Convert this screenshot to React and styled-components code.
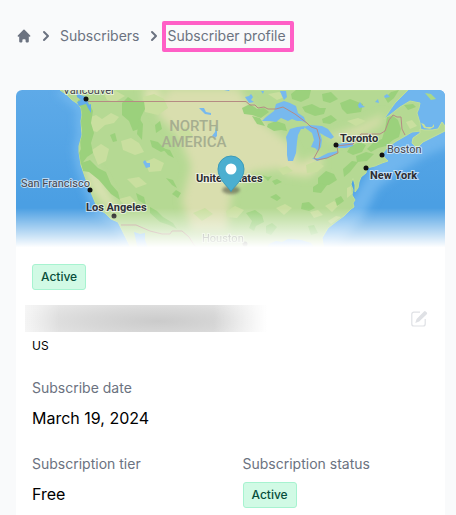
import React from 'react'

// Import icons
import { HiHome, HiChevronRight } from 'react-icons/hi'

// Import styled-components
import styled, { createGlobalStyle } from 'styled-components'

// map data
const westCoast =
  'M60 90L67 95 72 100 78 104 81 108 82 115 81 121 82 135 79 146 79 152 81 165 85 177 90 190 95 202 98 209 105 213 111 219 118 222 123 232 127 240 132 250'

const mainland = `${westCoast} L324 250 322 238 328 228 337 221 344 216 351 209 354 207 353 203 355 200 352 195 353 190 351 184 353 178 355 185 355 192 358 188 359 182 361 177 366 173 367 168 375 166 382 163 388 161 384 157 383 153 387 148 395 142 407 135 412 132 421 131 420 123 417 113 419 108 420 103 410 101 400 107 390 115 384 119 390 110 395 103 400 98 408 90Z`

const novaScotia =
  'M420 129L424 130 432 130 438 129 442 122 445 126 445 131 433 137 423 142 417 148 412 143 413 138 420 133Z'

const darkPatches = [
  'M78 100l6-2 5 5 4 8-2 12 3 10-3 10 2 10-6 4-6 8-4-2 1-8 3-6-1-9 2-10-3-12z',
  'M81 163l9-3 8 8 8 4 5 12 7 8 2 8-9-6-12-14-10-8-6-1z',
  'M122 103l6-6 6 4 10 0 1 8-4 8-2 12-6 2-4-10-7-6z',
  'M110 135l5-2 2 8-4 1z',
  'M139 118l4 6-1 16-5-6z',
  'M150 140l8 2 8 8-5 2-9-5z',
  'M162 148l8 2 4 8-6-3z',
  'M155 125l5-4 2 8-6 4z',
  'M166 178l7 2 4 8-5-3z',
  'M150 207l7 4 6 6 10 6 4 6-8-4-9-3-10-9z',
  'M136 193l8 4 2 8-8-5z',
  'M172 194l4-4 5 3-3 5z',
  'M242 108l8-4 7 5 7-1 5 4-8 6-9-3-8-1z',
  'M252 116l8 2 5 8-8-2z',
  'M268 124l8-3 9 3 2 7-6-1-7 1-7-4z',
  'M246 213l9-3 7 5 2 7-8 4-2 5-5-3 3-7z',
  'M270 197l6-3 5 4-4 3z',
  'M272 181l5-2 5 3-7 3z',
  'M266 226l6-3 5 4-6 8-5-2z',
  'M262 175l6 2 4-1-4 5z',
  'M291 94l5-4 15 0-2 8-8 4-9-3z',
  'M302 107l10-3 8 4 6 0-2 6-9 2-10-4z',
  'M322 94l9-2 7 7-8 4-7-2z',
  'M340 103l10-4 13 5-2 8-14 2-5-5z',
  'M322 119l9-4 6 5-7 4-7-1z',
  'M387 117l6-1 5 4 3 9-2 8-6 3-7 6-8 2-7 4-4-3 7-7 8-3 3-10z',
  'M350 147l9-5 7 3-4 7-9 3-6-3z',
  'M356 156l10-4 8 2-7 7-10 1z',
  'M343 169l9-8 6 1-8 10-6 5z',
  'M318 178l8-7 8 3 3 6-8 5-11 1z',
  'M313 187l6-4 8 2-6 8-8-1z',
  'M302 203l7-1 6 6-6 3-8-2z',
  'M335 199l6-3 3 5-7 5z',
  'M308 226l6-1 4 8-7 2z',
  'M385 98l6-6 8-2-5 8-6 5z',
  'M404 105l9-1 3 3-8 3z',
]

const lightPatches = [
  'M88 118l8-3 6 4 9-6 8 4-5 6-9 2-8 7-8-2z',
  'M104 94l12-3 9 5-10 6-8-2z',
  'M92 150l9-6 8 5-3 12-8 4z',
  'M121 141l10-3 8 5 5 9-9 3-12-5z',
  'M143 97l11-3 10 5 4 9-10 7-13-3z',
  'M145 162l9-4 10 5-3 8-12 1z',
  'M127 179l12-2 8 7-11 4z',
  'M119 199l11-3 7 7-11 4z',
  'M178 132l8-5 7 8-8 8z',
  'M306 165l10-4 8 5-7 6-10 1z',
  'M325 206l9-5 5 4-7 7z',
  'M347 188l4-2 1 8-5 4z',
  'M328 221l8-5 5 1-10 7z',
  'M310 212l8-2 5 5-9 3z',
  'M347 121l11-3 8 3-10 5z',
  'M278 169l9-3 6 5-10 4z',
  'M276 208l9-4 7 4-8 7z',
  'M226 211l9-5 9 4-7 8-10-1z',
  'M193 213l12-5 8 6-11 7z',
  'M268 94l11-2 8 4-10 4z',
  'M406 122l6-2 5 6-7 3z',
]

const lakes = [
  // Superior
  'M262 121L266 117 270 114 274 111 276 104 284 101 290 103 296 106 298 113 304 117 306 123 302 121 297 121 292 119 288 121 281 118 276 122 270 121Z',
  // Michigan
  'M286 137L290 129 297 127 305 126 304 129 301 129 298 135 297 142 296 153 293 161 288 161 287 155 287 143Z',
  // Huron
  'M304 127L310 125 322 126 328 129 334 137 331 139 325 136 320 133 322 140 321 147 318 151 315 148 311 147 314 140 312 133 308 130Z',
  // Erie
  'M312 158L318 158 328 153 338 151 337 153 327 158 317 161Z',
  // Ontario
  'M338 144L344 143 353 143 353 146 346 148 338 148Z',
  // small lakes
  'M245 97l4-1 2-2 2 3-2 3 3 2-5 1-2-3z',
  'M280 91l6 0 1 6-3 3-2-4z',
  'M261 91l3 0-1 3z',
  'M199 108l5 0 2 4 5 1 0 2-6-1z',
  'M216 124l1 7 0 5-3 3-2-3 3-4z',
  'M143 162l2-2 2 3 3 0 0 4-4 1z',
  'M358 105l2-3 2 3 3 2-6 1z',
  'M375 102l3-3 1 4z',
  'M384 96l3-2 3 3-5 1z',
  'M224 89l6 0-1 2-5-1z',
]

const cities = [
  { name: 'Vancouver', x: 63, y: 94, dot: [86, 99] },
  { name: 'San Francisco', x: 21, y: 187, dot: [90, 190] },
  { name: 'Los Angeles', x: 86, y: 211, dot: [114, 216], bold: true },
  { name: 'Toronto', x: 340, y: 142, dot: [336, 145], bold: true },
  { name: 'Boston', x: 387, y: 153, dot: [382, 155] },
  { name: 'New York', x: 370, y: 179, dot: [366, 168], bold: true },
  { name: 'Houston', x: 202, y: 242, dot: [245, 244], muted: true },
  { name: 'United States', x: 196, y: 182, bold: true },
]

const App = () => {
  return (
    <>
      <GlobalStyle />
      <Page>
        <Breadcrumbs aria-label='Breadcrumb'>
          <HomeLink href='#' aria-label='Home'>
            <HiHome size={16} />
          </HomeLink>
          <HiChevronRight size={20} />
          <Crumb href='#'>Subscribers</Crumb>
          <HiChevronRight size={20} />
          <CurrentCrumb href='#' aria-current='page'>
            Subscriber profile
          </CurrentCrumb>
        </Breadcrumbs>
        <Card>
          <LocationMap />
          <CardBody>
            <Badge>Active</Badge>
            <Identity>
              <HiddenEmail />
              <EditButton type='button' aria-label='Edit subscriber'>
                <EditIcon />
              </EditButton>
            </Identity>
            <Country>US</Country>
            <Details>
              <Field $wide>
                <Label>Subscribe date</Label>
                <Value>March 19, 2024</Value>
              </Field>
              <Field>
                <Label>Subscription tier</Label>
                <Value>Free</Value>
              </Field>
              <Field>
                <Label>Subscription status</Label>
                <Value>
                  <Badge>Active</Badge>
                </Value>
              </Field>
            </Details>
          </CardBody>
        </Card>
      </Page>
    </>
  )
}

const EditIcon = () => (
  <svg width='18' height='18' viewBox='0 0 18 18' fill='none'>
    <path
      d='M9 2.2H2.8a2 2 0 0 0-2 2v9.800a2 2 0 0 0 2 2h9.400a2 2 0 0 0 2-2V9'
      stroke='currentColor'
      strokeWidth='1.2'
    />
    <path
      d='M13 1.400a1.200 1.200 0 0 1 1.700 0l1.100 1.100a1.200 1.200 0 0 1 0 1.700L8.200 11.600 4.300 13l1.300-4z'
      fill='currentColor'
    />
  </svg>
)

const LocationMap = () => (
  <MapFrame>
    <MapDrawing
      viewBox='16 90 429 160'
      preserveAspectRatio='xMidYMid slice'
      role='img'
      aria-label='Subscriber location'
    >
      <defs>
        <linearGradient id='ocean' x1='0' y1='0' x2='0' y2='1'>
          <stop offset='0' stopColor='#5eaae8' />
          <stop offset='0.7' stopColor='#4b9fe3' />
        </linearGradient>
        <filter id='soft' x='-20%' y='-20%' width='140%' height='140%'>
          <feGaussianBlur stdDeviation='4' />
        </filter>
        <filter id='shade' x='-50%' y='-50%' width='200%' height='200%'>
          <feGaussianBlur stdDeviation='1.5' />
        </filter>
        <clipPath id='landClip'>
          <path d={mainland} />
        </clipPath>
      </defs>
      <rect x='16' y='90' width='429' height='160' fill='url(#ocean)' />
      <g filter='url(#soft)'>
        <path
          d='M455 80H370v90l-15 25-40 35v30h10l38-42 15-30 25-18 22-14 30-12z'
          fill='#70b6ee'
        />
        <path d={westCoast} fill='none' stroke='#72b8ee' strokeWidth='9' />
      </g>
      {/* land */}
      <path d={mainland} fill='#b5d993' stroke='#bfdf97' />
      <path d={novaScotia} fill='#b5d993' stroke='#c3e09a' />
      <path d='M421 123l3 1 2 3 6 0 2-3 0 3-4 2-6-1z' fill='#c8df99' />
      <path d='M425 93l6 1 5 5-5 1z' fill='#aad98a' />
      <g clipPath='url(#landClip)'>
        <g filter='url(#soft)'>
          <path
            d='M168 88h70l24 34 18 14 10 8 8 16-12 8-34 4-20 17-5 42h-35l-10-30 9-35-12-30-22-22z'
            fill='#d9deae'
          />
          <path d='M84 165l9 2 9 13 9 16 8 15-12-3-15-18z' fill='#dae2b2' />
          <path d='M278 160l17 4 24-8 4 8-14 13-24-3z' fill='#dcdfae' />
          <path d='M143 88h18v15l-15 3z' fill='#dfe2b4' />
          <path d='M325 136l14-3 17-6 15-7 13-6-3 10-24 13-20 4z' fill='#d8deaa' />
        </g>
        {lightPatches.map((d) => (
          <path key={d} d={d} fill='#c9df9f' />
        ))}
        {darkPatches.map((d) => (
          <path key={d} d={d} fill='#9bd17c' />
        ))}
      </g>
      {/* inland water */}
      <path d='M134 232l6 2 5-1 0 7 4 10h-11z' fill='#7dbcf0' />
      <path d='M76 91l5 4 5 2 3 8 2-1 0 9-3-5-2-4-7 2-2-4 4-2-4-3z' fill='#62adea' />
      {lakes.map((d) => (
        <path key={d} d={d} fill='#77b9ee' />
      ))}
      <path d='M269 244l7-3 6 1 6-3 13 1 10 3 5 7h-50z' fill='#82bef0' />
      {/* borders */}
      <g fill='none' stroke='#b58b83' strokeWidth='1'>
        <path d='M88 101.5H246L250 105 255 105 258 108 264 107 268 109 276 109 283 107 295 114 307 123 311 127 317 129 320 140 319 149 314 158 317 160 327 158 338 153 337 146 353 144 361 134H380L385 131 389 120 393 115 397 117 401 117 402 129 405 135' />
        <path d='M121 225h15l14 6 12 3h8l2-3h10l7 6 5 8 6 5' />
      </g>
      <RegionLabel x='194' y='131'>
        NORTH
      </RegionLabel>
      <RegionLabel x='194' y='147'>
        AMERICA
      </RegionLabel>
      {cities.map(({ name, x, y, dot, bold, muted }) => (
        <g key={name} opacity={muted ? 0.7 : 1}>
          {dot && <circle cx={dot[0]} cy={dot[1]} r='2.5' fill='#111' />}
          <CityLabel x={x} y={y} $bold={bold}>
            {name}
          </CityLabel>
        </g>
      ))}
      {/* marker */}
      <ellipse cx='231' cy='190' rx='9' ry='4' fill='#55594a' opacity='0.6' filter='url(#shade)' />
      <path
        d='M231 191.500c-3-5-13-12-13-22.500a13 13 0 0 1 26 0c0 10.500-10 17.500-13 22.500z'
        fill='#4cafd0'
        stroke='#3b9bb9'
      />
      <circle cx='231' cy='169' r='5.5' fill='#fff' />
    </MapDrawing>
    <MapFade />
  </MapFrame>
)

const GlobalStyle = createGlobalStyle`
  *,
  *::before,
  *::after {
    box-sizing: border-box;
  }

  body {
    margin: 0;
    background: #f9fafb;
    color: #000;
    font-family: Inter, 'Liberation Sans', sans-serif;
  }
`

const Page = styled.main`
  display: flex;
  flex-direction: column;
  min-height: 100vh;
  padding: 26px 11px 0 16px;
`

const Breadcrumbs = styled.nav`
  display: flex;
  align-items: center;
  gap: 4px;
  margin-bottom: 44px;
  color: #6b7280;
`

const HomeLink = styled.a`
  display: flex;
  color: inherit;
`

const Crumb = styled.a`
  color: inherit;
  font-size: 14px;
  font-weight: 400;
  line-height: 20px;
  text-decoration: none;
  white-space: nowrap;
`

const CurrentCrumb = styled(Crumb)`
  position: relative;

  &::after {
    content: '';
    position: absolute;
    inset: -5px -8px -6px -6px;
    border: 4px solid #ff5fc6;
    border-radius: 2px;
  }
`

const Card = styled.section`
  flex: 1;
  overflow: hidden;
  border-radius: 6px 6px 0 0;
  background: #fff;
`

const MapFrame = styled.div`
  position: relative;
  height: 160px;
`

const MapDrawing = styled.svg`
  display: block;
  width: 100%;
  height: 100%;
`

const MapFade = styled.div`
  position: absolute;
  inset: auto 0 0;
  height: 42px;
  background: linear-gradient(to bottom, rgba(255, 255, 255, 0), #fff 94%);
`

const RegionLabel = styled.text`
  fill: #a6ae90;
  font-family: Roboto, sans-serif;
  font-size: 15px;
  font-weight: 500;
  text-anchor: middle;
`

const CityLabel = styled.text`
  fill: ${({ $bold }) => ($bold ? '#2c2c33' : '#45454d')};
  font-family: Roboto, sans-serif;
  font-size: 11px;
  font-weight: ${({ $bold }) => ($bold ? 700 : 400)};
  paint-order: stroke;
  stroke: rgba(255, 255, 255, 0.6);
  stroke-width: 2px;
`

const CardBody = styled.div`
  padding: 14px 16px 0;
`

const Badge = styled.span`
  display: block;
  width: fit-content;
  padding: 4px 8px;
  border: 1px solid #a7f3d0;
  border-radius: 3px;
  background: #d1fae5;
  color: #064e3b;
  font-size: 12px;
  font-weight: 500;
  line-height: 16px;
`

const Identity = styled.div`
  display: flex;
  align-items: center;
  justify-content: space-between;
  margin: 15px 0 6px -7px;
`

const HiddenEmail = styled.div`
  width: 60%;
  height: 27px;
  background:
    linear-gradient(to right, rgba(255, 255, 255, 0.6), transparent 14%, transparent 78%, #fff),
    radial-gradient(ellipse 60% 90% at 55% 60%, #cbcbcb, #d8d8d8 50%, #e8e8e8);
`

const EditButton = styled.button`
  display: flex;
  padding: 0;
  border: 0;
  background: none;
  color: #dfe1e5;
  cursor: pointer;
`

const Country = styled.div`
  font-size: 12px;
  line-height: 16px;
`

const Details = styled.dl`
  display: grid;
  grid-template-columns: 1fr 1fr;
  gap: 24px;
  margin: 24px 0 0;
`

const Field = styled.div`
  grid-column: ${({ $wide }) => ($wide ? '1 / -1' : 'auto')};
`

const Label = styled.dt`
  color: #6b7280;
  font-size: 14px;
  line-height: 20px;
`

const Value = styled.dd`
  margin: 8px 0 0;
  font-size: 16px;
  line-height: 24px;
`

export default App
